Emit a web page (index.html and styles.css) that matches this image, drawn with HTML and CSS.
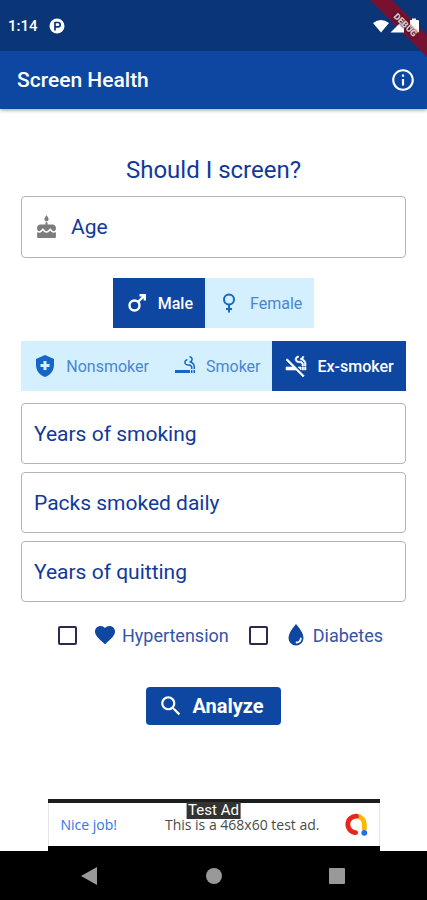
FILE: index.html
```html
<!DOCTYPE html>
<html lang="en">
<head>
<meta charset="utf-8">
<meta name="viewport" content="width=device-width, initial-scale=1">
<title>Screen Health</title>
<link rel="stylesheet" href="styles.css">
</head>
<body>
<div class="status-bar">
  <span>1:14</span>
  <svg class="status-app" viewBox="0 0 16 16" aria-hidden="true"><circle cx="8" cy="8" r="7.500" fill="#fff"/><path d="M6 4v8.500M6 4.500h3a2.200 2.200 0 0 1 0 4.400H6" fill="none" stroke="#0a3576" stroke-width="1.700"/></svg>
  <div class="ribbon"></div>
  <svg class="status-icons" viewBox="0 0 48 16" aria-hidden="true"><path d="M0 5Q8-1 16 5L8 14.500z" fill="#fff"/><path d="M17.500 14.500L31 1v13.500z" fill="#fff"/><path d="M37 2h2V.5h4V2h2q1 0 1 1v10.500q0 1-1 1h-7q-1 0-1-1z" fill="#fff"/></svg>
  <span class="ribbon-text">DEBUG</span>
</div>
<header class="app-bar">
  <h1>Screen Health</h1>
  <button class="info" type="button" aria-label="Information">
    <svg viewBox="0 0 24 24"><path d="M11 7h2v2h-2zm0 4h2v6h-2zm1-9C6.480 2 2 6.480 2 12s4.480 10 10 10 10-4.480 10-10S17.520 2 12 2zm0 18c-4.410 0-8-3.590-8-8s3.590-8 8-8 8 3.590 8 8-3.590 8-8 8z"/></svg>
  </button>
</header>
<main>
  <form>
    <h2>Should I screen?</h2>
    <label class="field">
      <svg viewBox="0 0 24 24" aria-hidden="true"><path d="M12 6c1.110 0 2-.9 2-2 0-.38-.1-.73-.29-1.030L12 0l-1.710 2.970c-.19.3-.29.65-.29 1.030 0 1.100.9 2 2 2zm4.600 9.990l-1.070-1.070-1.080 1.070c-1.300 1.300-3.580 1.310-4.890 0l-1.070-1.070-1.090 1.070C6.750 16.640 5.880 17 4.960 17c-.73 0-1.400-.23-1.960-.61V21c0 .55.45 1 1 1h16c.55 0 1-.45 1-1v-4.610c-.56.38-1.230.61-1.960.61-.92 0-1.790-.36-2.440-1.010zM18 9h-5V7h-2v2H6c-1.660 0-3 1.340-3 3v1.540c0 1.080.88 1.960 1.960 1.960.52 0 1.020-.2 1.380-.57l2.140-2.130 2.130 2.130c.74.74 2.030.74 2.770 0l2.140-2.130 2.130 2.130c.37.37.86.57 1.380.57 1.080 0 1.960-.88 1.960-1.960V12C21 10.340 19.660 9 18 9z"/></svg>
      <input type="text" inputmode="numeric" placeholder="Age" aria-label="Age">
    </label>
    <div class="segments" role="radiogroup" aria-label="Sex">
      <label class="segment">
        <input type="radio" name="sex" checked>
        <svg viewBox="0 0 24 24" aria-hidden="true"><g fill="none" stroke="currentColor" stroke-width="2.400"><circle cx="9.500" cy="14.500" r="5"/><path d="M13 11L19.500 4.500M14.500 4.200h5.300v5.300"/></g></svg>
        <span>Male</span>
      </label>
      <label class="segment">
        <input type="radio" name="sex">
        <svg viewBox="0 0 24 24" aria-hidden="true"><g fill="none" stroke="currentColor" stroke-width="2"><circle cx="12" cy="8.500" r="5"/><path d="M12 13.500v8M9 18h6"/></g></svg>
        <span>Female</span>
      </label>
    </div>
    <div class="segments" role="radiogroup" aria-label="Smoking status">
      <label class="segment">
        <input type="radio" name="smoking">
        <svg viewBox="0 0 24 24" aria-hidden="true"><path fill-rule="evenodd" d="M12 1L3 5v6c0 5.550 3.840 10.740 9 12 5.160-1.260 9-6.450 9-12V5zM10.500 7h3v3H16.500v3h-3V16h-3v-3h-3v-3h3z"/></svg>
        <span>Nonsmoker</span>
      </label>
      <label class="segment">
        <input type="radio" name="smoking">
        <svg viewBox="0 0 24 24" aria-hidden="true"><path d="M2 16h15v3H2zm18.500 0H22v3h-1.500zM18 16h1.500v3H18zm.85-8.270c.62-.61 1-1.450 1-2.380C19.850 3.500 18.350 2 16.500 2v1.500c1.020 0 1.850.83 1.850 1.850S17.520 7.200 16.500 7.200v1.500c2.240 0 4 1.830 4 4.070V15H22v-2.240c0-2.220-1.280-4.140-3.150-5.030zm-2.820 2.470H14.500c-1.020 0-1.850-.98-1.850-2s.83-1.750 1.850-1.750v-1.500c-1.850 0-3.350 1.500-3.350 3.350s1.500 3.350 3.350 3.350h1.530c1.050 0 1.970.74 1.970 2.050V15h1.500v-1.640c0-1.810-1.600-3.160-3.470-3.160z"/></svg>
        <span>Smoker</span>
      </label>
      <label class="segment">
        <input type="radio" name="smoking" checked>
        <svg viewBox="0 0 24 24" aria-hidden="true"><path stroke="currentColor" stroke-width=".6" d="M2 6l6.990 7H2v3h9.990l7 7 1.260-1.250-17-17zm18.500 7H22v3h-1.500zM18 13h1.500v3H18zm.85-8.120c.62-.61 1-1.450 1-2.380h-1.500c0 1.020-.83 1.850-1.850 1.850v1.500c2.240 0 4 1.830 4 4.070V12H22V9.920c0-2.230-1.280-4.150-3.150-5.040zM14.500 8.700h1.530c1.050 0 1.970.74 1.970 2.050V12h1.500v-1.590c0-1.800-1.600-3.160-3.470-3.160H14.500c-1.020 0-1.850-.98-1.850-2s.83-1.750 1.850-1.750V2c-1.850 0-3.350 1.500-3.350 3.350s1.500 3.350 3.350 3.350zm2.500 7.230V13h-2.930z"/></svg>
        <span>Ex-smoker</span>
      </label>
    </div>
    <div class="fields">
      <label class="field"><input type="text" inputmode="numeric" placeholder="Years of smoking" aria-label="Years of smoking"></label>
      <label class="field"><input type="text" inputmode="numeric" placeholder="Packs smoked daily" aria-label="Packs smoked daily"></label>
      <label class="field"><input type="text" inputmode="numeric" placeholder="Years of quitting" aria-label="Years of quitting"></label>
    </div>
    <div class="checks">
      <label class="check">
        <input type="checkbox">
        <svg viewBox="0 0 24 24" aria-hidden="true"><path d="M12 21.350l-1.450-1.320C5.400 15.360 2 12.280 2 8.500 2 5.420 4.420 3 7.500 3c1.740 0 3.410.81 4.500 2.090C13.090 3.810 14.760 3 16.500 3 19.580 3 22 5.420 22 8.500c0 3.780-3.400 6.860-8.550 11.540z"/></svg>
        <span>Hypertension</span>
      </label>
      <label class="check">
        <input type="checkbox">
        <svg viewBox="0 0 24 24" aria-hidden="true"><path d="M12 1Q4.500 9.500 4.500 15a7.500 7.500 0 0 0 15 0Q19.500 9.500 12 1z"/><path d="M16.800 15.500a4.500 4.500 0 0 1-4.300 4" fill="none" stroke="#fff" stroke-width="1.800" stroke-linecap="round"/></svg>
        <span>Diabetes</span>
      </label>
    </div>
    <button class="analyze" type="submit">
      <svg viewBox="0 0 24 24" aria-hidden="true"><path d="M15.500 14h-.79l-.28-.27C15.410 12.590 16 11.110 16 9.500 16 5.910 13.090 3 9.500 3S3 5.910 3 9.500 5.910 16 9.500 16c1.610 0 3.090-.59 4.230-1.570l.27.28v.79l5 4.990L20.490 19zm-6 0C7.010 14 5 11.990 5 9.500S7.010 5 9.500 5 14 7.010 14 9.500 11.990 14 9.500 14z"/></svg>
      <span>Analyze</span>
    </button>
  </form>
</main>
<aside class="ad" aria-label="Advertisement">
  <a href="#">Nice job!</a>
  <span class="ad-text">This is a 468x60 test ad.</span>
  <svg viewBox="0 0 24 24" aria-hidden="true"><g fill="none" stroke-width="4.600" stroke-linecap="round"><path d="M12 4a7.500 7.500 0 0 1 7.500 7.500V16" stroke="#fbb605"/><path d="M12 4a7.800 7.800 0 1 0-.8 15.800" stroke="#e8241c"/></g><circle cx="19.500" cy="20" r="2.800" fill="#1a73e8"/></svg>
  <span class="ad-tag">Test Ad</span>
</aside>
<nav class="nav-bar" aria-label="System">
  <button type="button" aria-label="Back"><svg viewBox="0 0 18 18"><path d="M16 0v18L0 9z"/></svg></button>
  <button type="button" aria-label="Home"><svg viewBox="0 0 18 18"><circle cx="9" cy="9" r="8"/></svg></button>
  <button type="button" aria-label="Overview"><svg viewBox="0 0 18 18"><rect x="1" y="1" width="16" height="16" rx="1"/></svg></button>
</nav>
</body>
</html>
```
FILE: styles.css
```css
* {
  box-sizing: border-box;
}

body {
  margin: 0;
  min-height: 100vh;
  display: flex;
  flex-direction: column;
  background: #fff;
  color: #12399a;
  font-family: Roboto, "Liberation Sans", sans-serif;
}

svg {
  display: block;
  flex: none;
  fill: currentColor;
}

button,
input {
  font: inherit;
  color: inherit;
}

.status-bar {
  position: relative;
  display: flex;
  align-items: center;
  gap: 11px;
  height: 51px;
  padding: 0 6px 0 8px;
  background: #0a3576;
  color: #fff;
  font-size: 15px;
  font-weight: 500;
}

.status-app {
  width: 16px;
  height: 16px;
}

.status-icons {
  position: relative;
  z-index: 2;
  width: 48px;
  height: 16px;
  margin-left: auto;
}

.ribbon {
  position: absolute;
  z-index: 1;
  top: 0;
  right: 0;
  width: 57px;
  height: 57px;
  background: #76122f;
  clip-path: polygon(0 0, 22px 0, 100% 35px, 100% 100%);
}

.ribbon-text {
  position: absolute;
  z-index: 3;
  top: 20px;
  right: 7px;
  color: #d8c8cc;
  font-size: 9px;
  line-height: 10px;
  font-weight: 900;
  text-shadow: 0 0 2px #400a18, 0 0 2px #400a18;
  transform: rotate(45deg);
}

.app-bar {
  display: flex;
  align-items: center;
  justify-content: space-between;
  height: 58px;
  padding: 0 11px 0 17px;
  background: #0d47a1;
  color: #fff;
  box-shadow: 0 1px 4px rgba(0, 0, 0, 0.4);
}

.app-bar h1 {
  margin: 0;
  font-size: 21px;
  font-weight: 500;
}

.info {
  padding: 0;
  border: 0;
  background: none;
}

.info svg {
  width: 26px;
  height: 26px;
}

main {
  flex: 1;
  padding: 45px 21px 24px;
}

form {
  display: flex;
  flex-direction: column;
  align-items: center;
}

h2 {
  margin: 0 0 10px;
  font-size: 24px;
  line-height: 32px;
  font-weight: 400;
}

.field {
  display: flex;
  align-items: center;
  gap: 12px;
  width: 100%;
  height: 62px;
  padding: 0 12px;
  border: 1px solid #b4b4b4;
  border-radius: 4px;
}

.fields .field {
  height: 61px;
}

.field svg {
  width: 25px;
  height: 25px;
  color: #7c7c7c;
}

.field input {
  flex: 1;
  min-width: 0;
  padding: 0;
  border: 0;
  outline: 0;
  background: none;
  font-size: 21px;
}

.field input::placeholder {
  color: #12399a;
  opacity: 1;
}

.segments {
  display: flex;
  margin-top: 20px;
}

.segments + .segments {
  margin-top: 13px;
}

.segment {
  display: flex;
  align-items: center;
  gap: 9px;
  height: 50px;
  padding: 0 12px;
  background: #d4f0ff;
  color: #4a86d0;
  font-size: 16px;
  white-space: nowrap;
}

.segment input {
  position: absolute;
  opacity: 0;
  pointer-events: none;
}

.segment svg {
  width: 24px;
  height: 24px;
  color: #1467c8;
}

.segment:has(:checked) {
  background: #0d47a1;
  color: #fff;
  font-weight: 500;
}

.segment:has(:checked) svg {
  color: #fff;
}

.fields {
  display: grid;
  gap: 8px;
  width: 100%;
  margin-top: 12px;
}

.checks {
  display: flex;
  justify-content: center;
  gap: 20px;
  margin-top: 20px;
  padding-left: 14px;
}

.check {
  display: flex;
  align-items: center;
  gap: 5px;
  height: 26px;
  color: #3454a8;
  font-size: 18px;
}

.check input {
  appearance: none;
  width: 19px;
  height: 19px;
  margin: 0 11px 0 0;
  border: 2px solid #2c2850;
  border-radius: 2px;
}

.check input:checked {
  background: #0d47a1;
}

.check svg {
  width: 24px;
  height: 24px;
  color: #0d47a1;
}

.analyze {
  display: flex;
  align-items: center;
  gap: 8px;
  height: 38px;
  margin-top: 39px;
  padding: 0 17px 0 12px;
  border: 0;
  border-radius: 4px;
  background: #0d47a1;
  color: #fff;
  font-size: 20px;
  font-weight: 700;
}

.analyze svg {
  width: 26px;
  height: 26px;
}

.ad {
  position: relative;
  display: flex;
  align-items: center;
  align-self: center;
  width: 332px;
  max-width: 100%;
  height: 52px;
  padding: 0 11px 0 13px;
  border-top: 4px solid #1c1e1d;
  border-bottom: 5px solid #000;
  box-shadow: inset 1px 0 #e4e4e4, inset -1px 0 #e4e4e4;
  font-family: "Open Sans", Roboto, sans-serif;
  font-size: 14px;
}

.ad a {
  color: #2f74e6;
  text-decoration: none;
}

.ad-text {
  margin: 0 24px 0 auto;
  color: #4a4a4a;
}

.ad svg {
  width: 25px;
  height: 25px;
}

.ad-tag {
  position: absolute;
  top: -1px;
  left: 50%;
  padding: 0 2px;
  background: #333;
  color: #fff;
  font-family: Roboto, sans-serif;
  font-size: 15px;
  line-height: 17px;
  transform: translateX(-50%);
}

.nav-bar {
  display: flex;
  justify-content: space-between;
  align-items: center;
  height: 49px;
  padding: 0 81px;
  background: #000;
  color: #999;
}

.nav-bar button {
  padding: 0;
  border: 0;
  background: none;
}

.nav-bar svg {
  width: 18px;
  height: 18px;
}
```
